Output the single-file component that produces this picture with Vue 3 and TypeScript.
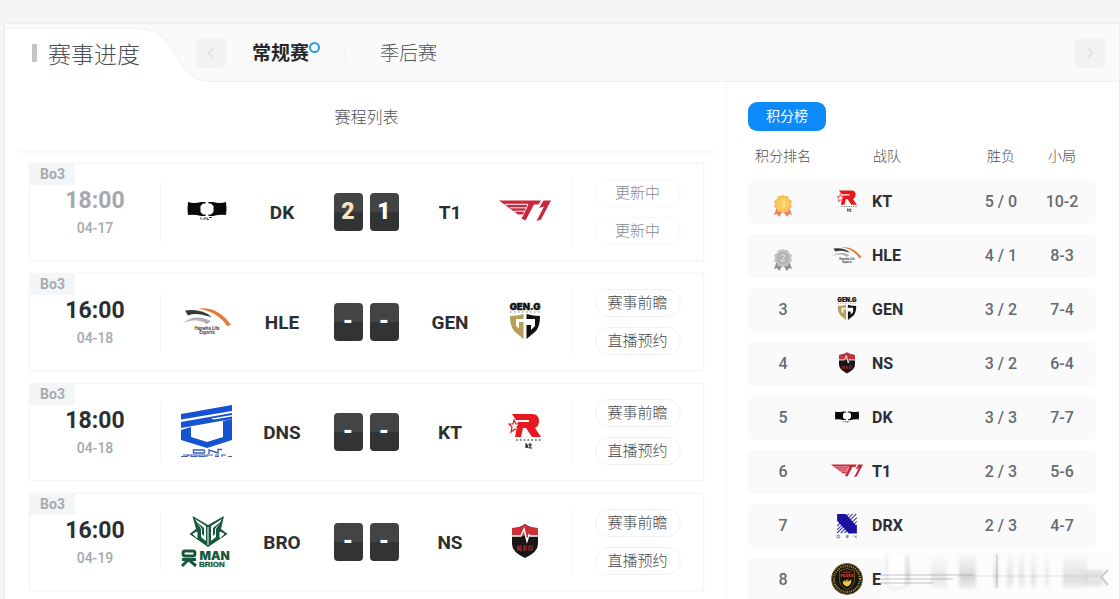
<script setup lang="ts">
import { ref } from 'vue'

interface Match {
  time: string
  date: string
  home: string
  away: string
  score: [string, string]
  done: boolean
}

interface Standing {
  rank: number
  team: string
  record: string
  games: string
}

const stages: string[] = ['常规赛', '季后赛']
const activeStage = ref<string>('常规赛')

const matches: Match[] = [
  { time: '18:00', date: '04-17', home: 'DK', away: 'T1', score: ['2', '1'], done: true },
  { time: '16:00', date: '04-18', home: 'HLE', away: 'GEN', score: ['-', '-'], done: false },
  { time: '18:00', date: '04-18', home: 'DNS', away: 'KT', score: ['-', '-'], done: false },
  { time: '16:00', date: '04-19', home: 'BRO', away: 'NS', score: ['-', '-'], done: false },
]

const standings: Standing[] = [
  { rank: 1, team: 'KT', record: '5 / 0', games: '10-2' },
  { rank: 2, team: 'HLE', record: '4 / 1', games: '8-3' },
  { rank: 3, team: 'GEN', record: '3 / 2', games: '7-4' },
  { rank: 4, team: 'NS', record: '3 / 2', games: '6-4' },
  { rank: 5, team: 'DK', record: '3 / 3', games: '7-7' },
  { rank: 6, team: 'T1', record: '2 / 3', games: '5-6' },
  { rank: 7, team: 'DRX', record: '2 / 3', games: '4-7' },
  { rank: 8, team: 'E', record: '', games: '' },
]

const actions = (m: Match): string[] => (m.done ? ['更新中', '更新中'] : ['赛事前瞻', '直播预约'])
</script>

<template>
  <div class="page">
    <svg class="sprite" aria-hidden="true">
      <symbol id="logo-DK" viewBox="0 0 52 52">
        <path d="M7 17Q13 19 20 17H32Q39 19 45 17Q46 24 45 30Q39 29 32 31H20Q13 29 7 30Q6 24 7 17Z" fill="#0a0a0a" />
        <path d="M22 18.500H30L32.500 21V27L30 29.500H22L19.500 27V21Z" fill="#fff" />
        <path d="M24.500 16H27.500V19H24.500ZM24.500 29H27.500V32H24.500Z" fill="#fff" />
        <path d="M20 34.500V32.500M22 34.500L24 32.500V34.500M26 32.500V34.500H28M28 32.500H31" stroke="#333" stroke-width="1" fill="none" />
      </symbol>
      <symbol id="logo-T1" viewBox="0 0 52 52">
        <path d="M0 15.500H42L39.500 19.500H35L26.500 35.500L22.500 33.500L24.500 29.500H19Z" fill="#c9283c" />
        <path d="M6 19.300H29M11 22.800H28M15 26.200H26" stroke="#fff" stroke-width="1" />
        <path d="M29 19.500L23 32" stroke="#fff" stroke-width=".8" />
        <path d="M44.500 15.500H52L42 34.500L37.500 36L45 21.500L40 23Z" fill="#c9283c" />
      </symbol>
      <symbol id="logo-HLE" viewBox="0 0 52 52">
        <path d="M4 15.500Q20 13 31 22L26 21Q15 17.500 7 20.500Z" fill="#373737" />
        <path d="M17 13.500Q37 11 50 30L46 31Q37 17 17 13.500Z" fill="#e27b36" />
        <path d="M2 28Q14 18 30 26L26 29Q15 22 2 28Z" fill="#b2b2b2" />
        <text x="26" y="34.500" font-size="4.500" font-weight="700" text-anchor="middle" font-family="Roboto, sans-serif" fill="#444">Hanwha Life</text>
        <text x="26" y="38.500" font-size="4.500" font-weight="700" text-anchor="middle" font-family="Roboto, sans-serif" fill="#444">Esports</text>
      </symbol>
      <symbol id="logo-GEN" viewBox="0 0 52 52">
        <text x="26" y="14.500" font-size="9.500" font-weight="900" text-anchor="middle" font-family="Inter, sans-serif" fill="#111" stroke="#111" stroke-width=".4">GEN.G</text>
        <path d="M11 17H41" stroke="#777" stroke-width="1" stroke-dasharray="1.500 2.500" />
        <path d="M11 21Q18 21 24.500 19V24H17V31L20 33.500V27H24.500V44L15 36Q11 31 11 21Z" fill="#b6a057" />
        <path d="M41 21Q34 21 27.500 19V24H36V27H27.500V44L37 36Q41 31 41 21ZM36 27V31L32 35V30H27.500V27Z" fill="#111" fill-rule="evenodd" />
      </symbol>
      <symbol id="logo-DNS" viewBox="0 0 52 52">
        <path d="M0 9L51 0V6L0 14.500ZM0 17L51 8V14L0 23Z" fill="#1553d2" />
        <path d="M30 13.500L51 10V11.500L33 14.500Z" fill="#fff" />
        <path d="M0 25L10 22V32L26 37L42 32V16L51 14V35L26 43L0 35Z" fill="#1553d2" />
        <path d="M12.500 48V45H21Q25 45 23 48ZM28 49V45L37 48V44.500H41" stroke="#3f61b3" stroke-width="1.400" fill="none" />
        <path d="M0 51.500H6L8 50H2M10 50H16V51.500H10ZM18 50H24V51.500H18ZM26 52V50H32M34 51.500H38M34 50H38M41 52V50H45M47 51.500H51" stroke="#3f61b3" stroke-width="1.200" fill="none" />
      </symbol>
      <symbol id="logo-KT" viewBox="0 0 52 52">
        <path d="M13 9H33Q40 9 40 16Q40 21 36 23L42 32H33L27 23H24L22 32H16L19 17H30V15H17Z" fill="#e5191f" />
        <path d="M15 15L17 19H21L18 22L20 26L16 24L12 27L13 22L10 19H14Z" fill="#fff" stroke="#e5191f" stroke-width="1.200" />
        <path d="M17 35H42" stroke="#666" stroke-width="1.500" stroke-dasharray="1.800 2" />
        <path d="M27 38V43M29.500 39.500L27.500 41L29.500 43M31 38V43H33M30 40H33" stroke="#222" stroke-width="1.200" fill="none" />
      </symbol>
      <symbol id="logo-BRO" viewBox="0 0 52 52">
        <path d="M11.500 1L27 10L43 1L40 14L46.500 19L27 32L8.500 19L15 14Z" fill="#17583d" />
        <path d="M14 4L25 11V26L20 22V14ZM41 4L30 11V26L35 22V14Z" fill="#fff" />
        <path d="M16 7L23 13V21L21 19V14ZM39 7L32 13V21L34 19V14Z" fill="#17583d" />
        <path d="M12 19L16 17V23ZM43 19L39 17V23ZM27 12V30" fill="#fff" stroke="#fff" stroke-width="1" />
        <text x="18.500" y="44.500" font-size="12" font-weight="900" font-family="Inter, sans-serif" fill="#17583d">MAN</text>
        <text x="18" y="51.800" font-size="8" font-weight="600" font-family="Liberation Sans, sans-serif" fill="#17583d" stroke="#17583d" stroke-width=".3">BRION</text>
        <path d="M4 36H12Q14 36 14 38.500Q14 41 12 41H4Q2 41 2 38.500Q2 36 4 36Z" fill="none" stroke="#17583d" stroke-width="3" />
        <path d="M1 44.500H15M7 45L1 51M8 45L15 51" stroke="#17583d" stroke-width="3" />
      </symbol>
      <symbol id="logo-NS" viewBox="0 0 52 52">
        <path d="M13 13Q21 13 26 9Q31 13 39 13V29Q39 37 26 43Q13 37 13 29Z" fill="#1a1516" />
        <path d="M13 13Q21 13 26 9Q31 13 39 13V21H13Z" fill="#cb3038" />
        <path d="M13 21H22L25 14L28 26L30 20L31 21H39" fill="none" stroke="#fff" stroke-width="1.500" />
        <path d="M19 36V31H22V33H19L23 36M28 31H25V35H28M25 33H28M30 31V35H33V31H30" fill="none" stroke="#a92b35" stroke-width="1.200" />
      </symbol>
      <symbol id="logo-DRX" viewBox="0 0 52 52">
        <path d="M10 28L29 8M10 34L35 8M10 39L41 8M16 39L42 14M22 39L42 20M28 39L42 26" stroke="#4740ae" stroke-width="1.800" />
        <path d="M10 8H24L42 28V40H29L10 19Z" fill="#1c10a3" />
        <path d="M10 43H14V47H10ZM25 47V43H28V45H25L28 47M38 43L42 47M42 43L38 47" stroke="#6560a5" stroke-width="1.200" fill="none" />
      </symbol>
      <symbol id="logo-E" viewBox="0 0 52 52">
        <circle cx="26" cy="26" r="25.500" fill="#17140f" />
        <circle cx="26" cy="26" r="25" fill="none" stroke="#a58a27" stroke-width="1" />
        <circle cx="26" cy="26" r="21" fill="none" stroke="#c0a436" stroke-width="3.500" stroke-dasharray="1.500 2" />
        <path d="M14 13L26 9L38 13V30Q36 39 26 43Q16 39 14 30Z" fill="#17140f" stroke="#9c822b" stroke-width="1" />
        <text x="26" y="23" font-size="7" font-weight="900" text-anchor="middle" font-family="Roboto, sans-serif" fill="#cc3c28">FEARX</text>
        <path d="M19 31L24 27L22 31L29 25L26 31L33 27Q34 36 26 38Q20 37 19 31Z" fill="#e2c83f" />
        <path d="M20 15H32" stroke="#a33226" stroke-width="2" />
      </symbol>
    </svg>

    <main class="panel">
      <header class="head">
        <div class="title-box">
          <svg class="title-shape" viewBox="0 0 205 58" preserveAspectRatio="none" aria-hidden="true">
            <path d="M0 5H130C152 5 160 13 169 27C178 44 184 57 205 57V58H0Z" fill="#fff" />
            <path d="M0 4.500H130C152 5 160 13 169 27C178 44 184 57 205 57.500" fill="none" stroke="#f0f1f1" />
          </svg>
          <h1 class="title">赛事进度</h1>
        </div>
        <button class="arrow" type="button" aria-label="上一个">
          <svg viewBox="0 0 10 14"><path d="M8 1L2 7L8 13" /></svg>
        </button>
        <nav class="stages">
          <button
            v-for="s in stages"
            :key="s"
            type="button"
            class="stage"
            :class="{ on: s === activeStage }"
            @click="activeStage = s"
          >{{ s }}</button>
        </nav>
        <button class="arrow next" type="button" aria-label="下一个">
          <svg viewBox="0 0 10 14"><path d="M2 1L8 7L2 13" /></svg>
        </button>
      </header>

      <div class="body">
        <section class="schedule">
          <h2 class="sub">赛程列表</h2>
          <div class="cards">
            <article v-for="(m, i) in matches" :key="i" class="card" :class="{ done: m.done }">
              <span class="tag">Bo3</span>
              <div class="when">
                <strong class="time">{{ m.time }}</strong>
                <span class="date">{{ m.date }}</span>
              </div>
              <div class="versus">
                <svg class="logo"><use :href="'#logo-' + m.home" /></svg>
                <span class="name">{{ m.home }}</span>
                <div class="score">
                  <b v-for="(n, k) in m.score" :key="k" :class="{ win: n === '2' }">{{ n }}</b>
                </div>
                <span class="name">{{ m.away }}</span>
                <svg class="logo"><use :href="'#logo-' + m.away" /></svg>
              </div>
              <div class="acts">
                <button v-for="(a, k) in actions(m)" :key="k" type="button" class="act">{{ a }}</button>
              </div>
            </article>
          </div>
        </section>

        <aside class="board">
          <button class="pill" type="button">积分榜</button>
          <table class="table">
            <thead>
              <tr>
                <th class="c-rank">积分排名</th>
                <th class="c-team">战队</th>
                <th class="c-rec">胜负</th>
                <th class="c-games">小局</th>
              </tr>
            </thead>
            <tbody>
              <tr v-for="s in standings" :key="s.rank">
                <td class="c-rank">
                  <svg v-if="s.rank < 3" class="medal" :class="'m' + s.rank" viewBox="0 0 18 22" role="img" :aria-label="String(s.rank)">
                    <path class="ribbon" d="M3 12L0 20L3 19L5 22L9 16L13 22L15 19L18 20L15 12Z" />
                    <path class="disc" d="M9 0L11 1L14 1L15 4L18 6L17 9L18 12L15 14L14 17L11 17L9 18L7 17L4 17L3 14L0 12L1 9L0 6L3 4L4 1L7 1Z" />
                    <circle class="core" cx="9" cy="9" r="6" />
                    <path v-if="s.rank === 1" class="mark" d="M8 7L10 5V12" />
                    <path v-else class="mark" d="M7 7Q9 4 11 7L7 12H11" />
                  </svg>
                  <template v-else>{{ s.rank }}</template>
                </td>
                <td class="c-team">
                  <span class="team">
                    <svg class="mini"><use :href="'#logo-' + s.team" /></svg>
                    <span>{{ s.team }}</span>
                  </span>
                </td>
                <td class="c-rec">{{ s.record }}</td>
                <td class="c-games">{{ s.games }}</td>
              </tr>
            </tbody>
          </table>
          <svg class="smear" viewBox="0 0 240 50" aria-hidden="true">
            <defs>
              <linearGradient id="fade" x1="0" y1="0" x2="0" y2="1">
                <stop offset="0" stop-color="#aaa" stop-opacity=".05" />
                <stop offset=".7" stop-color="#999" stop-opacity=".38" />
                <stop offset="1" stop-color="#bbb" stop-opacity=".25" />
              </linearGradient>
              <filter id="soft" x="-20%" y="-20%" width="140%" height="140%"><feGaussianBlur stdDeviation="1.400" /></filter>
            </defs>
            <rect x="11" y="0" width="229" height="50" fill="#fcfcfc" />
            <g filter="url(#soft)">
              <path d="M14 4V34Q24 38 33 34V4" fill="#fff" stroke="#ccc" stroke-width="1" />
              <rect x="33" y="0" width="4" height="34" fill="url(#fade)" />
              <rect x="58" y="4" width="16" height="32" fill="url(#fade)" opacity=".6" />
              <rect x="86" y="2" width="17" height="34" fill="url(#fade)" />
              <rect x="121" y="0" width="4" height="36" fill="url(#fade)" />
              <rect x="134" y="2" width="6" height="34" fill="url(#fade)" opacity=".7" />
              <rect x="146" y="2" width="5" height="34" fill="url(#fade)" opacity=".7" />
              <rect x="158" y="2" width="5" height="34" fill="url(#fade)" opacity=".7" />
              <rect x="172" y="2" width="4" height="34" fill="url(#fade)" opacity=".5" />
              <rect x="190" y="4" width="24" height="32" fill="url(#fade)" opacity=".8" />
              <rect x="212" y="18" width="18" height="16" fill="#ccc" opacity=".5" />
            </g>
            <path d="M7 23H100M7 27H80M7 31H60" stroke="#999" stroke-width="1" opacity=".6" />
            <path d="M90 24H226" stroke="#bbb" stroke-width="1" opacity=".4" />
            <path d="M124 2V36" stroke="#888" stroke-width="1" opacity=".5" />
            <path d="M235 18L228 25L235 33" fill="none" stroke="#ccc" stroke-width="2" />
          </svg>
        </aside>
      </div>
    </main>
  </div>
</template>

<style>
body {
  margin: 0;
  background: #f3f5f6;
}
</style>

<style scoped>
.page {
  box-sizing: border-box;
  height: 100vh;
  overflow: hidden;
  padding: 24px 1px 0 5px;
  background: #f3f5f6;
  color: #2b2f33;
  font-family: Roboto, "Noto Sans CJK SC", sans-serif;
}
.page * {
  box-sizing: border-box;
}
button {
  padding: 0;
  border: 0;
  background: none;
  color: inherit;
  font: inherit;
  cursor: pointer;
}
.sprite {
  display: none;
}
.panel {
  min-height: 100%;
  background: #fff;
  box-shadow: 0 0 2px #dcdedf;
}
.head {
  display: flex;
  align-items: center;
  height: 58px;
  padding-right: 14px;
  border-bottom: 1px solid #eff0f0;
  background: #fafafa;
}
.title-box {
  position: relative;
  width: 191px;
  height: 58px;
  flex: none;
}
.title-shape {
  position: absolute;
  top: 0;
  left: 0;
  width: 205px;
  height: 58px;
}
.title {
  position: relative;
  display: flex;
  align-items: center;
  gap: 11px;
  height: 58px;
  margin: 0;
  padding-left: 27px;
  color: #4b5054;
  font-size: 23px;
  font-weight: 300;
}
.title::before {
  content: "";
  width: 5px;
  height: 18px;
  background: #c3c4c5;
}
.arrow {
  position: relative;
  display: flex;
  align-items: center;
  justify-content: center;
  width: 30px;
  height: 30px;
  border-radius: 6px;
  background: #f1f2f3;
}
.arrow svg {
  width: 8px;
  height: 14px;
  fill: none;
  stroke: #dde2e5;
  stroke-width: 2;
}
.next {
  margin-left: auto;
}
.stages {
  display: flex;
  align-items: center;
  padding: 3px 0 0 26px;
}
.stage {
  position: relative;
  color: #505559;
  font-size: 19px;
  font-weight: 300;
  line-height: 28px;
}
.stage + .stage {
  margin-left: 36px;
  padding-left: 35px;
}
.stage + .stage::before {
  content: "";
  position: absolute;
  top: 8px;
  left: 0;
  width: 1px;
  height: 14px;
  background: #ececec;
}
.stage.on {
  color: #25282b;
  font-weight: 700;
}
.stage.on::after {
  content: "";
  position: absolute;
  top: 2px;
  right: -11px;
  width: 7px;
  height: 7px;
  border: 2px solid #2b9fd9;
  border-radius: 50%;
}
.body {
  display: flex;
}
.schedule {
  flex: 1;
  border-right: 1px solid #f0f1f1;
}
.sub {
  height: 68px;
  margin: 0 8px 0 10px;
  box-shadow: 0 6px 6px -4px #f3f4f4;
  color: #4b5054;
  font-size: 16px;
  font-weight: 300;
  line-height: 72px;
  text-align: center;
}
.cards {
  display: flex;
  flex-direction: column;
  gap: 12px;
  padding: 13px 22px 12px 24px;
}
.card {
  position: relative;
  display: grid;
  grid-template-columns: 131px 1fr 132px;
  align-items: center;
  height: 98px;
  border: 1px solid #f5f5f5;
  box-shadow: 0 0 4px #f8f8f8;
}
.tag {
  position: absolute;
  top: 0;
  left: 0;
  width: 45px;
  height: 21px;
  background: #f4f5f7;
  color: #a5abb2;
  font-size: 14px;
  font-weight: 700;
  line-height: 21px;
  text-align: center;
}
.when {
  display: flex;
  flex-direction: column;
  align-items: center;
  gap: 4px;
  height: 60px;
  padding-top: 6px;
  border-right: 1px solid #f6f6f6;
}
.time {
  font-size: 23px;
  line-height: 26px;
}
.date {
  color: #a3a9af;
  font-size: 14px;
  font-weight: 500;
  line-height: 20px;
}
.done .time {
  color: #a3a9af;
}
.versus {
  display: grid;
  grid-template-columns: 92px 58px 1fr 58px 92px;
  align-items: center;
  justify-items: center;
}
.logo {
  width: 52px;
  height: 52px;
  margin-bottom: 2px;
}
.name {
  font-size: 19px;
  font-weight: 700;
}
.score {
  display: flex;
  gap: 7px;
}
.score b {
  width: 29px;
  height: 38px;
  border-radius: 4px;
  background: linear-gradient(#434446 50%, #323335 50%);
  color: #fff;
  font-size: 23px;
  font-weight: 900;
  line-height: 38px;
  text-align: center;
}
.score .win {
  color: #f7e4c2;
}
.acts {
  display: flex;
  flex-direction: column;
  align-items: center;
  gap: 10px;
  border-left: 1px solid #f6f6f6;
}
.act {
  width: 86px;
  height: 28px;
  border: 1px solid #f0f1f1;
  border-radius: 14px;
  background: #fff;
  color: #43484d;
  font-size: 15px;
  font-weight: 300;
  line-height: 26px;
}
.done .act {
  border-color: #f6f6f6;
  color: #85898d;
}
.board {
  position: relative;
  width: 392px;
  padding: 20px 23px 0 21px;
}
.pill {
  display: block;
  width: 78px;
  height: 29px;
  border-radius: 9px;
  background: #0d8bfb;
  color: #fff;
  font-size: 14px;
  line-height: 29px;
}
.table {
  width: 100%;
  margin-top: 1px;
  table-layout: fixed;
  border-spacing: 0 10px;
  font-weight: 500;
}
.table th {
  height: 28px;
  padding: 0 0 2px;
  color: #4b5054;
  font-size: 14px;
  font-weight: 300;
  white-space: nowrap;
}
.table td {
  height: 44px;
  padding: 0 0 2px;
  background: #fafafa;
  color: #666b72;
  font-size: 16px;
  text-align: center;
}
.table td:first-child {
  border-radius: 6px 0 0 6px;
}
.table td:last-child {
  border-radius: 0 6px 6px 0;
}
.c-rank {
  width: 70px;
}
.table th.c-team {
  padding-left: 55px;
  text-align: left;
}
.c-rec {
  width: 62px;
}
.table .c-games {
  width: 64px;
  padding-right: 4px;
}
.team {
  display: flex;
  align-items: center;
  gap: 9px;
  padding-left: 13px;
  color: #2b2f33;
  font-weight: 700;
}
.mini {
  width: 32px;
  height: 32px;
}
.medal {
  display: block;
  width: 18px;
  height: 22px;
  margin: 10px auto 0;
}
.m1 .ribbon { fill: #e8836a; }
.m1 .disc { fill: #f6bf62; }
.m1 .core { fill: #fbcf57; }
.m2 .ribbon { fill: #8d8f91; }
.m2 .disc { fill: #c2c3c4; }
.m2 .core { fill: #b2b3b4; }
.mark {
  fill: none;
  stroke: #fff;
  stroke-width: 1;
  opacity: 0.7;
}
.smear {
  position: absolute;
  top: 470px;
  left: 146px;
  width: 240px;
  height: 50px;
}
</style>
